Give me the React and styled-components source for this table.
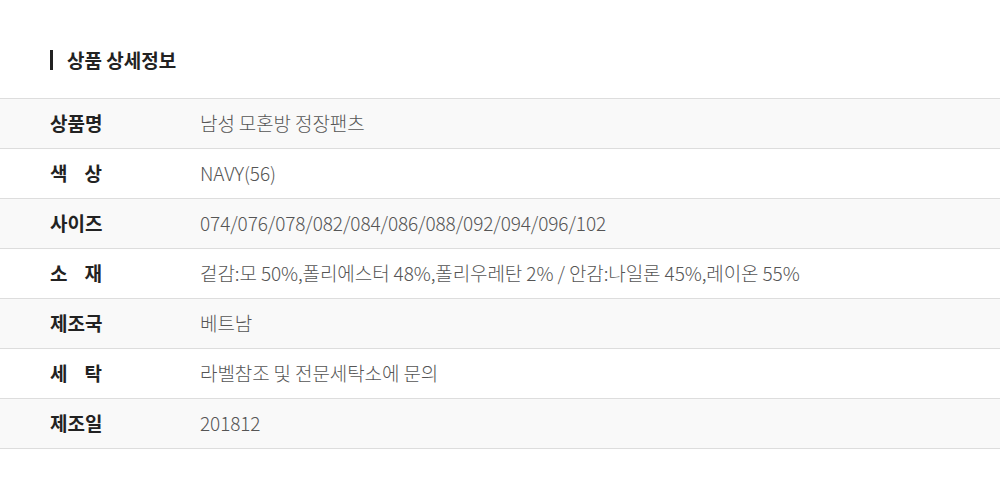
import React from 'react'
import styled, { createGlobalStyle } from 'styled-components'

const rows = [
  ['상품명', '남성 모혼방 정장팬츠'],
  ['색상', 'NAVY(56)'],
  ['사이즈', '074/076/078/082/084/086/088/092/094/096/102'],
  ['소재', '겉감:모 50%,폴리에스터 48%,폴리우레탄 2% / 안감:나일론 45%,레이온 55%'],
  ['제조국', '베트남'],
  ['세탁', '라벨참조 및 전문세탁소에 문의'],
  ['제조일', '201812'],
]

export default function App() {
  return (
    <>
      <Global />
      <Wrap>
        <Title>상품 상세정보</Title>
        <Table>
          {rows.map(([label, value], i) => (
            <Row key={label} shaded={i % 2 === 0}>
              <Label>
                <LabelText>
                  {label.split('').map((ch, j) => <span key={j}>{ch}</span>)}
                </LabelText>
              </Label>
              <Value>{value}</Value>
            </Row>
          ))}
        </Table>
      </Wrap>
    </>
  )
}

const Global = createGlobalStyle`
  body {
    margin: 0;
    background: #fff;
    font-family: "Noto Sans CJK KR", "Noto Sans", sans-serif;
  }
`

const Wrap = styled.div`
  width: 1000px;
  padding-top: 50px;
`

const Title = styled.h2`
  margin: 0 0 28px 50px;
  padding-left: 14px;
  border-left: 3px solid #222;
  height: 20px;
  line-height: 19px;
  font-size: 19px;
  font-weight: 700;
  color: #222;
`

const Table = styled.div`
  border-top: 1px solid #ddd;
`

const Row = styled.div`
  display: flex;
  align-items: center;
  height: 50px;
  box-sizing: border-box;
  padding-bottom: 3px;
  border-bottom: 1px solid #ddd;
  background: ${props => props.shaded ? '#f9f9f9' : '#fff'};
`

const Label = styled.div`
  width: 200px;
  padding-left: 50px;
  box-sizing: border-box;
  font-size: 19px;
  font-weight: 700;
  color: #222;
`

const LabelText = styled.div`
  display: flex;
  justify-content: space-between;
  width: 52px;
`

const Value = styled.div`
  font-size: 19px;
  font-weight: 300;
  color: #555;
  letter-spacing: -0.1px;
`
